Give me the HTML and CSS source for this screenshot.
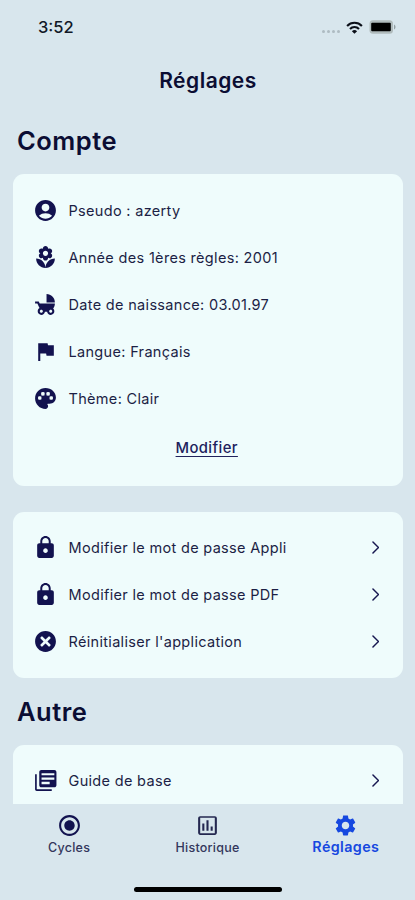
FILE: index.html
```html
<!DOCTYPE html>
<html lang="fr">
<head>
<meta charset="utf-8">
<title>Réglages</title>
<link rel="stylesheet" href="styles.css">
</head>
<body>
<div class="screen">
  <header class="status">
    <span class="time">3:52</span>
    <div class="status-icons">
      <span class="signal"><i></i><i></i><i></i><i></i></span>
      <svg class="wifi" viewBox="0 0 17 13"><g fill="none" stroke="#0b0f18" stroke-width="2.1"><path d="M1.1 4.9a10.3 10.3 0 0 1 14.8 0"/><path d="M4 7.9a6.3 6.3 0 0 1 9 0"/></g><path d="M8.500 12.800L5.900 10.300a3.700 3.700 0 0 1 5.200 0z" fill="#0b0f18"/></svg>
      <svg class="battery" viewBox="0 0 27 14"><rect x=".5" y=".3" width="23.500" height="13.400" rx="3.500" fill="#b0bbbc"/><rect x="2.200" y="2.700" width="19.600" height="8.600" rx="1" fill="#000"/><path d="M25 4.500c2 .8 2 4.200 0 5z" fill="#94a0a3"/></svg>
    </div>
  </header>
  <h1 class="title">Réglages</h1>
  <main class="content">
    <h2 class="section">Compte</h2>
    <section class="card account">
      <div class="row"><svg class="icon" viewBox="0 0 24 24"><path d="M12 2C6.480 2 2 6.480 2 12s4.480 10 10 10 10-4.480 10-10S17.520 2 12 2zM12 5.500c2.100 0 3.700 1.600 3.700 3.700S14.100 12.900 12 12.900s-3.700-1.600-3.700-3.700S9.900 5.500 12 5.500zM12 20c-2.030 0-4.630-.82-6.340-2.880C7.350 15.300 9.680 14.600 12 14.600s4.650.7 6.340 2.520C16.630 19.180 14.030 20 12 20z"/></svg><span>Pseudo : azerty</span></div>
      <div class="row"><svg class="icon" viewBox="0 0 24 24"><path d="M12 22c4.970 0 9-4.030 9-9-4.970 0-9 4.030-9 9zM5.600 10.250c0 1.380 1.120 2.500 2.500 2.500.53 0 1.010-.16 1.420-.44l-.02.19c0 1.380 1.120 2.500 2.500 2.500s2.500-1.120 2.500-2.500l-.02-.19c.4.28.89.44 1.420.44 1.380 0 2.500-1.120 2.500-2.500 0-1-.59-1.850-1.430-2.250.84-.4 1.430-1.250 1.430-2.250 0-1.380-1.120-2.500-2.500-2.500-.53 0-1.010.16-1.420.44l.02-.19C14.500 2.120 13.380 1 12 1S9.500 2.120 9.500 3.500l.02.19c-.4-.28-.89-.44-1.420-.44-1.380 0-2.500 1.120-2.500 2.500 0 1 .59 1.850 1.430 2.250-.84.4-1.430 1.250-1.430 2.250zM12 5.500c1.380 0 2.500 1.120 2.500 2.500s-1.120 2.500-2.500 2.500S9.500 9.380 9.500 8s1.120-2.500 2.500-2.500zM3 13c0 4.970 4.030 9 9 9 0-4.970-4.030-9-9-9z"/></svg><span>Année des 1ères règles: 2001</span></div>
      <div class="row"><svg class="icon" viewBox="0 0 24 24"><path d="M13 2v8h8c0-4.420-3.580-8-8-8zm6.320 13.890C20.370 14.540 21 12.840 21 11H6.440l-.95-2H2v2h2.220s1.890 4.070 2.120 4.420c-1.100.59-1.840 1.750-1.840 3.080C4.500 20.430 6.070 22 8 22c1.760 0 3.220-1.300 3.460-3h2.080c.24 1.700 1.700 3 3.460 3 1.930 0 3.500-1.570 3.500-3.500 0-1.040-.46-1.970-1.180-2.610zM8 20c-.83 0-1.500-.67-1.500-1.500S7.170 17 8 17s1.500.67 1.500 1.500S8.830 20 8 20zm9 0c-.83 0-1.500-.67-1.500-1.500s.67-1.500 1.500-1.500 1.500.67 1.500 1.500-.67 1.500-1.500 1.500z"/></svg><span>Date de naissance: 03.01.97</span></div>
      <div class="row"><svg class="icon" viewBox="0 0 24 24"><path d="M14.400 6L14 4H5v17h2v-7h5.600l.4 2h7V6z"/></svg><span>Langue: Français</span></div>
      <div class="row"><svg class="icon" viewBox="0 0 24 24"><path d="M12 2C6.490 2 2 6.490 2 12s4.490 10 10 10c1.380 0 2.500-1.120 2.500-2.500 0-.61-.23-1.200-.64-1.670-.08-.1-.13-.21-.13-.33 0-.28.22-.5.5-.5H16c3.310 0 6-2.690 6-6 0-4.960-4.490-9-10-9zm5.500 11c-.83 0-1.500-.67-1.500-1.500s.67-1.500 1.500-1.500 1.500.67 1.500 1.500-.67 1.500-1.500 1.500zm-3-4c-.83 0-1.500-.67-1.500-1.500S13.670 6 14.500 6s1.500.67 1.500 1.500S15.330 9 14.500 9zM5 11.500c0-.83.67-1.500 1.500-1.500s1.500.67 1.500 1.500S7.330 13 6.500 13 5 12.330 5 11.500zm6-4c0 .83-.67 1.500-1.500 1.500S8 8.330 8 7.500 8.670 6 9.500 6s1.500.67 1.500 1.500z"/><path class="dots" d="M5 10h3v3H5zM8 6h3v3H8zM13 6h3v3h-3zM16 10h3v3h-3z"/></svg><span>Thème: Clair</span></div>
      <a class="edit">Modifier</a>
    </section>
    <section class="card security">
      <div class="row"><svg class="icon" viewBox="0 0 24 24"><path d="M18 8h-1V6c0-2.760-2.240-5-5-5S7 3.240 7 6v2H6c-1.100 0-2 .9-2 2v10c0 1.100.9 2 2 2h12c1.100 0 2-.9 2-2V10c0-1.100-.9-2-2-2zm-6 9.200c-1.200 0-2.200-1-2.200-2.200s1-2.200 2.200-2.200 2.200 1 2.200 2.200-1 2.200-2.200 2.200zm3.100-9.200H8.900V6c0-1.710 1.390-3.100 3.100-3.100 1.710 0 3.100 1.390 3.100 3.100v2z"/></svg><span>Modifier le mot de passe Appli</span><svg class="chevron" viewBox="0 0 8 14"><path d="M1 1l6 6-6 6"/></svg></div>
      <div class="row"><svg class="icon" viewBox="0 0 24 24"><path d="M18 8h-1V6c0-2.760-2.240-5-5-5S7 3.240 7 6v2H6c-1.100 0-2 .9-2 2v10c0 1.100.9 2 2 2h12c1.100 0 2-.9 2-2V10c0-1.100-.9-2-2-2zm-6 9.200c-1.200 0-2.200-1-2.200-2.200s1-2.200 2.200-2.200 2.200 1 2.200 2.200-1 2.200-2.200 2.200zm3.100-9.200H8.900V6c0-1.710 1.390-3.100 3.100-3.100 1.710 0 3.100 1.390 3.100 3.100v2z"/></svg><span>Modifier le mot de passe PDF</span><svg class="chevron" viewBox="0 0 8 14"><path d="M1 1l6 6-6 6"/></svg></div>
      <div class="row"><svg class="icon" viewBox="0 0 24 24"><path d="M12 2C6.470 2 2 6.470 2 12s4.470 10 10 10 10-4.470 10-10S17.530 2 12 2zm5 13.590L15.590 17 12 13.410 8.410 17 7 15.590 10.590 12 7 8.410 8.410 7 12 10.590 15.590 7 17 8.410 13.410 12 17 15.590z"/><path class="cross" d="M8 8l8 8M16 8l-8 8"/></svg><span>Réinitialiser l'application</span><svg class="chevron" viewBox="0 0 8 14"><path d="M1 1l6 6-6 6"/></svg></div>
    </section>
    <h2 class="section other">Autre</h2>
    <section class="card guide">
      <div class="row"><svg class="icon" viewBox="0 0 24 24"><path d="M3.600 6H2v14.400c0 .9.700 1.600 1.600 1.600H18v-1.600H3.600V6zM20.500 2H8c-1.100 0-2 .9-2 2v12.500c0 1.100.9 2 2 2h12.500c1.100 0 2-.9 2-2V4c0-1.100-.9-2-2-2zM20.500 11.200H8.200V9.200h12.300v2zM16 15.500H8.200v-2.200H16v2.200zM20.500 7H8.200V5h12.300v2z"/></svg><span>Guide de base</span><svg class="chevron" viewBox="0 0 8 14"><path d="M1 1l6 6-6 6"/></svg></div>
    </section>
  </main>
  <nav class="tabs">
    <div class="tab"><svg class="icon" viewBox="0 0 24 24"><path d="M12 7c-2.760 0-5 2.240-5 5s2.240 5 5 5 5-2.240 5-5-2.240-5-5-5zm0-5C6.480 2 2 6.480 2 12s4.480 10 10 10 10-4.480 10-10S17.520 2 12 2zm0 18c-4.420 0-8-3.580-8-8s3.580-8 8-8 8 3.580 8 8-3.580 8-8 8z"/></svg><span>Cycles</span></div>
    <div class="tab"><svg class="icon chart" viewBox="0 0 24 24"><path d="M9 17H7v-7h2v7zm4 0h-2V7h2v10zm4 0h-2v-4h2v4zm2 2.500H5V4.500h14v15zm0-16.500H5c-1.100 0-2 .9-2 2v14c0 1.100.9 2 2 2h14c1.100 0 2-.9 2-2V5c0-1.100-.9-2-2-2z"/></svg><span>Historique</span></div>
    <div class="tab active"><svg class="icon" viewBox="0 0 24 24"><path d="M19.140 12.940c.04-.3.06-.61.06-.94 0-.32-.02-.64-.07-.94l2.030-1.580c.18-.14.23-.41.12-.61l-1.920-3.320c-.12-.22-.37-.29-.59-.22l-2.390.96c-.5-.38-1.030-.7-1.620-.94l-.36-2.540c-.04-.24-.24-.41-.48-.41h-3.840c-.24 0-.43.17-.47.41l-.36 2.540c-.59.24-1.130.57-1.620.94l-2.390-.96c-.22-.08-.47 0-.59.22L2.740 8.870c-.12.21-.08.47.12.61l2.030 1.580c-.05.3-.09.63-.09.94s.02.64.07.94l-2.030 1.580c-.18.14-.23.41-.12.61l1.920 3.320c.12.22.37.29.59.22l2.390-.96c.5.38 1.030.7 1.620.94l.36 2.540c.05.24.24.41.48.41h3.840c.24 0 .44-.17.47-.41l.36-2.540c.59-.24 1.130-.56 1.620-.94l2.390.96c.22.08.47 0 .59-.22l1.920-3.320c.12-.22.07-.47-.12-.61l-2.010-1.580zM12 15.600c-1.980 0-3.600-1.620-3.600-3.600s1.620-3.600 3.600-3.600 3.600 1.620 3.600 3.600-1.620 3.600-3.600 3.600z"/></svg><span>Réglages</span></div>
    <div class="home"></div>
  </nav>
</div>
</body>
</html>
```
FILE: styles.css
```css
* { box-sizing: border-box; }
body { margin: 0; background: #d8e6ed; font-family: Inter, sans-serif; color: #1c1f45; }
.screen { width: 415px; height: 900px; overflow: hidden; display: flex; flex-direction: column; background: #d8e6ed; }
.status { height: 54px; flex: none; display: flex; justify-content: space-between; align-items: center; padding: 0 19px 0 38px; }
.time { font-size: 16.5px; font-weight: 500; letter-spacing: 0; color: #111827; }
.status-icons { display: flex; align-items: center; }
.signal { display: flex; gap: 2px; margin: 8px 6px 0 0; }
.signal i { width: 3px; height: 3px; border-radius: 50%; background: #aebbc2; }
.wifi { width: 17px; height: 13px; margin-right: 6px; }
.battery { width: 27px; height: 14px; }
.title { flex: none; margin: 0; height: 53px; line-height: 53px; text-align: center; text-indent: 1px; font-size: 21px; font-weight: 600; letter-spacing: .5px; color: #0b0d33; }
.content { flex: 1; min-height: 0; overflow: hidden; padding: 0 12px 0 13px; }
.section { margin: 0 0 0 4px; height: 67px; line-height: 67px; font-size: 25.5px; font-weight: 600; letter-spacing: .5px; color: #0b0d33; }
.card { background: #effcfc; border-radius: 11px; padding: 12.5px 24px 0 19.5px; }
.account { height: 312px; display: flex; flex-direction: column; margin-bottom: 26px; }
.security { height: 166px; padding-top: 12px; }
.other { height: 67px; }
.guide { height: 120px; padding-top: 12px; }
.row { height: 47px; flex: none; display: flex; align-items: center; font-size: 14.5px; letter-spacing: .32px; }
.icon { width: 25px; height: 25px; flex: none; fill: #12124f; }
.row .icon { margin-right: 11px; }
.icon .dots { fill: #effcfc; }
.icon .cross { fill: none; stroke: #effcfc; stroke-width: 2.6; }
.chart { fill: #242850; }
.chevron { width: 7.5px; height: 13px; margin-left: auto; fill: none; stroke: #171750; stroke-width: 1.6; stroke-linecap: round; stroke-linejoin: round; }
.edit { align-self: center; margin-top: 16px; padding-left: 2px; font-size: 14.8px; line-height: 20px; font-weight: 500; letter-spacing: .4px; color: #20215c; text-decoration: underline; text-underline-offset: 3px; text-decoration-thickness: 1px; }
.tabs { height: 96px; flex: none; display: grid; grid-template: 87px 1fr / 1fr 1fr 1fr; justify-items: center; }
.tab { display: flex; flex-direction: column; align-items: center; padding-top: 9px; font-size: 12.5px; line-height: 19px; letter-spacing: .25px; font-weight: 500; color: #33365c; }
.tab.active { color: #1648e0; font-size: 14.3px; line-height: 18px; letter-spacing: .4px; font-weight: 600; }
.tab.active .icon { fill: #1648e0; }
.home { grid-column: 1 / -1; width: 148px; height: 5px; margin: -4px 0 0 1px; border-radius: 3px; background: #000; }
```
